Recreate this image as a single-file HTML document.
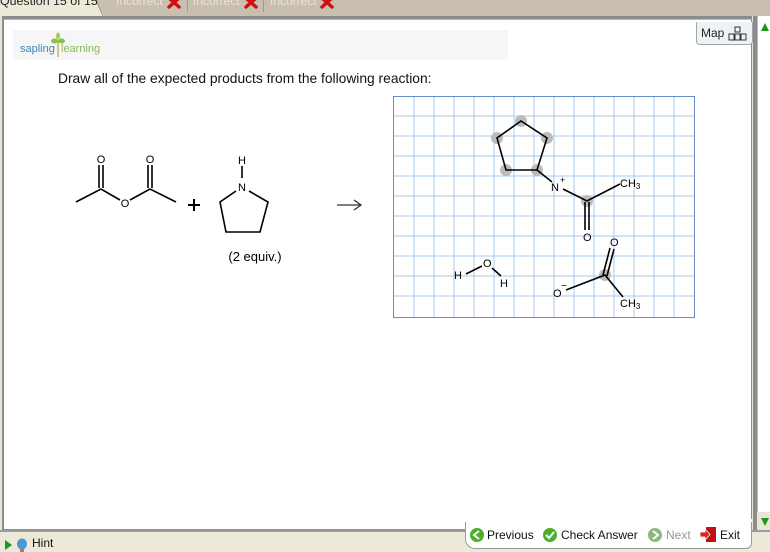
<!DOCTYPE html>
<html><head><meta charset="utf-8"><style>
html,body{margin:0;padding:0}
body{width:770px;height:552px;position:relative;overflow:hidden;background:#e9e6d7;font-family:"Liberation Sans",Arial,sans-serif}
.abs{position:absolute}
</style></head><body>
<div class="abs" style="left:0;top:0;width:770px;height:16px;background:#c9bfb1"></div>
<div class="abs" style="left:0;top:0;width:106px;height:16px;background:#ece9d8"></div>
<svg class="abs" style="left:96px;top:0" width="14" height="17"><path d="M0 0 L8 16 L14 16 L14 0Z" fill="#c9bfb1"/><path d="M0 0 L7 16" stroke="#9a9288" fill="none"/></svg>
<div class="abs" style="left:0;top:-6px;font-size:12.4px;color:#222">Question 15 of 15</div>
<div class="abs" style="left:116px;top:-6px;font-size:12px;color:#e8e4dc">Incorrect</div>
<div class="abs" style="left:193px;top:-6px;font-size:12px;color:#e8e4dc">Incorrect</div>
<div class="abs" style="left:270px;top:-6px;font-size:12px;color:#e8e4dc">Incorrect</div>
<div class="abs" style="left:187px;top:0;width:1px;height:12px;background:#8aa0b8"></div>
<div class="abs" style="left:263px;top:0;width:1px;height:12px;background:#8aa0b8"></div>
<svg class="abs" style="left:167px;top:-3px" width="14" height="12"><path d="M2 1 L12 10 M12 1 L2 10" stroke="#d01010" stroke-width="3.5" stroke-linecap="round"/></svg>
<svg class="abs" style="left:244px;top:-3px" width="14" height="12"><path d="M2 1 L12 10 M12 1 L2 10" stroke="#d01010" stroke-width="3.5" stroke-linecap="round"/></svg>
<svg class="abs" style="left:320px;top:-3px" width="14" height="12"><path d="M2 1 L12 10 M12 1 L2 10" stroke="#d01010" stroke-width="3.5" stroke-linecap="round"/></svg>
<div class="abs" style="left:2px;top:16px;width:750px;height:514px;background:#8c8c8c"></div>
<div class="abs" style="left:4px;top:19px;width:747px;height:509px;background:#fff;border-top:1px solid #bbb"></div>
<div class="abs" style="left:753px;top:16px;width:4px;height:514px;background:#8c8c8c"></div>
<div class="abs" style="left:757px;top:16px;width:13px;height:496px;background:#fff;border-left:1px solid #bbb"></div>
<svg class="abs" style="left:760px;top:22px" width="10" height="10"><path d="M1 9 L5 1 L9 9Z" fill="#1a9a1a"/></svg>
<svg class="abs" style="left:760px;top:517px" width="10" height="10"><path d="M1 1 L5 9 L9 1Z" fill="#1a9a1a"/></svg>
<div class="abs" style="left:13px;top:30px;width:495px;height:30px;background:#f6f6f6"></div>
<div class="abs" style="left:20px;top:43px;font-size:11px;color:#3a87b5">sapling</div>
<div class="abs" style="left:61px;top:43px;font-size:11px;color:#8ab95a">learning</div>
<svg class="abs" style="left:51px;top:32px" width="14" height="26"><path d="M7 8 L7 25" stroke="#c8b070" stroke-width="1.5"/><ellipse cx="3.5" cy="9" rx="3.5" ry="2.5" fill="#8cc24a"/><ellipse cx="10.5" cy="9" rx="3.5" ry="2.5" fill="#8cc24a"/><ellipse cx="7" cy="4" rx="2" ry="3.5" fill="#9cd25a"/></svg>
<div class="abs" style="left:696px;top:22px;width:55px;height:22px;background:#eef1f6;border:1px solid #9aa;border-top:none;border-radius:0 0 4px 4px"></div>
<div class="abs" style="left:701px;top:26px;font-size:12px;color:#222">Map</div>
<svg class="abs" style="left:727px;top:26px" width="22" height="16"><g fill="none" stroke="#333" stroke-width="1"><rect x="8" y="1" width="5" height="5"/><rect x="2" y="8" width="5" height="6"/><rect x="8" y="8" width="5" height="6"/><rect x="14" y="8" width="5" height="6"/></g></svg>
<div class="abs" style="left:58px;top:71px;font-size:13.8px;color:#111">Draw all of the expected products from the following reaction:</div>
<svg class="abs" style="left:0;top:0" width="770" height="552" font-family="Liberation Sans,Arial,sans-serif">
<g stroke="#000" stroke-width="1.6" fill="none">
<path d="M76 202 L101 189 L120 200"/>
<path d="M130 200 L150 189 L176 202"/>
<path d="M99 188 L99 165 M103 188 L103 165"/>
<path d="M148 188 L148 165 M152 188 L152 165"/>
<path d="M242 166 L242 178"/>
<path d="M236 191 L220 202 L226 232 L260 232 L268 202 L249 191"/>
<path d="M188 205 L200 205 M194 199 L194 211" stroke-width="2"/>
<path d="M337 205 L361 205 M354 200 L361 205 L354 210" stroke="#333" stroke-width="1.3"/>
</g>
<g font-size="11" text-anchor="middle" fill="#000">
<text x="101" y="163">O</text><text x="150" y="163">O</text>
<text x="125" y="207">O</text>
<text x="242" y="164">H</text><text x="242" y="191">N</text>
</g>
<text x="255" y="261" font-size="13" text-anchor="middle">(2 equiv.)</text>
</svg>
<svg class="abs" style="left:393px;top:96px" width="302" height="222">
<rect x="0.5" y="0.5" width="301" height="221" fill="#fff" stroke="#6a8fc8"/>
<g stroke="#a9c8ef" stroke-width="1">
<path d="M21 1V221M41 1V221M61 1V221M81 1V221M101 1V221M121 1V221M141 1V221M161 1V221M181 1V221M201 1V221M221 1V221M241 1V221M261 1V221M281 1V221"/>
<path d="M1 20H301M1 40H301M1 60H301M1 80H301M1 100H301M1 120H301M1 140H301M1 160H301M1 180H301M1 200H301"/>
</g>
<rect x="0.5" y="0.5" width="301" height="221" fill="none" stroke="#6a8fc8"/>
<g transform="translate(-393,-96)" font-family="Liberation Sans,Arial,sans-serif">
<g fill="#bbb"><circle cx="521" cy="121" r="6"/><circle cx="547" cy="138" r="6"/><circle cx="537" cy="170" r="6"/><circle cx="506" cy="170" r="6"/><circle cx="497" cy="138" r="6"/><circle cx="587" cy="201" r="6"/><circle cx="605" cy="275" r="6"/></g>
<g stroke="#000" stroke-width="1.6" fill="none">
<path d="M521 121 L547 138 L537 170 L506 170 L497 138Z"/>
<path d="M537 170 L552 182 M563 189 L587 201 L620 184"/>
<path d="M585 202 L585 230 M589 202 L589 230"/>
<path d="M466 274 L482 266 M492 268 L501 276"/>
<path d="M566 290 L605 275 L623 297"/>
<path d="M603 275 L610 248 M607 276 L614 249"/>
</g>
<g font-size="11" fill="#000">
<text x="551" y="191">N</text><text x="560" y="183" font-size="9">+</text>
<text x="620" y="187">CH<tspan font-size="8" dy="2">3</tspan></text>
<text x="583" y="241">O</text>
<text x="454" y="279">H</text><text x="483" y="267">O</text><text x="500" y="287">H</text>
<text x="610" y="246">O</text>
<text x="553" y="297">O</text><text x="561" y="289" font-size="10">−</text>
<text x="620" y="307">CH<tspan font-size="8" dy="2">3</tspan></text>
</g></g>
</svg>
<div class="abs" style="left:0;top:530px;width:770px;height:22px;background:#ece9d8"></div>
<div class="abs" style="left:0;top:530px;width:770px;height:2px;background:#9c9c9c"></div>
<div class="abs" style="left:465px;top:521px;width:285px;height:27px;background:#fff;border:1px solid #999;border-top:none;border-radius:0 0 6px 10px"></div>
<div class="abs" style="left:462px;top:519px;width:290px;height:3px;background:#fff"></div>
<svg class="abs" style="left:4px;top:538px" width="40" height="14"><path d="M1 2 L8 7 L1 12Z" fill="#1a9a1a"/><ellipse cx="18" cy="6" rx="5" ry="5.5" fill="#4a9ad8"/><rect x="16" y="10" width="4" height="4" fill="#888"/></svg>
<div class="abs" style="left:32px;top:536px;font-size:12px;color:#111">Hint</div>
<svg class="abs" style="left:469px;top:527px" width="16" height="16"><circle cx="8" cy="8" r="7" fill="#4caf2a"/><path d="M10 4 L5 8 L10 12" stroke="#fff" stroke-width="2" fill="none"/></svg>
<div class="abs" style="left:487px;top:528px;font-size:12px;color:#111">Previous</div>
<svg class="abs" style="left:542px;top:527px" width="16" height="16"><circle cx="8" cy="8" r="7" fill="#4caf2a"/><path d="M4 8 L7 11 L12 5" stroke="#fff" stroke-width="2" fill="none"/></svg>
<div class="abs" style="left:561px;top:528px;font-size:12px;color:#111">Check Answer</div>
<svg class="abs" style="left:647px;top:527px" width="16" height="16"><circle cx="8" cy="8" r="7" fill="#8fb880"/><path d="M6 4 L11 8 L6 12" stroke="#fff" stroke-width="2" fill="none"/></svg>
<div class="abs" style="left:666px;top:528px;font-size:12px;color:#999">Next</div>
<svg class="abs" style="left:699px;top:526px" width="18" height="17"><rect x="7" y="1" width="10" height="15" fill="#c01010"/><path d="M1 6 L6 6 L6 3 L11 8.5 L6 14 L6 11 L1 11Z" fill="#e02020" stroke="#fff" stroke-width="0.8"/></svg>
<div class="abs" style="left:720px;top:528px;font-size:12px;color:#111">Exit</div>
</body></html>
